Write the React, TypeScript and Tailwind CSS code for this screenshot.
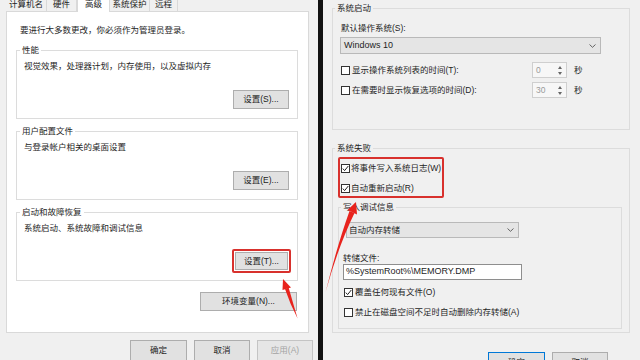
const Check = ({ checked }: { checked?: boolean }) => (
  <span className="w-[9px] h-[9px] border border-[#333] bg-white flex items-center justify-center shrink-0">
    {checked && (
      <svg width="7" height="7" viewBox="0 0 7 7">
        <polyline points="0.8,3.6 2.6,5.6 6.3,1" fill="none" stroke="#222" strokeWidth="1" />
      </svg>
    )}
  </span>
);

const Chevron = () => (
  <svg width="7" height="4" viewBox="0 0 7 4" className="shrink-0">
    <polyline points="0.5,0.5 3.5,3.3 6.5,0.5" fill="none" stroke="#555" strokeWidth="0.9" />
  </svg>
);

const Btn = ({ label, className = "" }: { label: string; className?: string }) => (
  <div
    className={`shrink-0 bg-[#e1e1e1] border border-[#adadad] flex items-center justify-center text-[#222] ${className}`}
  >
    {label}
  </div>
);

const Spin = ({ value }: { value: string }) => (
  <div className="w-[35px] h-[16px] border border-[#cfcfcf] bg-[#f7f7f7] flex items-center">
    <span className="flex-1 pl-[3px] text-[#9a9a9a]">{value}</span>
    <div className="w-[8px] h-full flex flex-col items-center justify-center gap-[3px] mr-[2px]">
      <svg width="4" height="3" viewBox="0 0 4 3">
        <polygon points="0,3 2,0 4,3" fill="#666" />
      </svg>
      <svg width="4" height="3" viewBox="0 0 4 3">
        <polygon points="0,0 2,3 4,0" fill="#666" />
      </svg>
    </div>
  </div>
);

const Tab = ({ label, w, active }: { label: string; w: string; active?: boolean }) => (
  <div
    className={`${w} flex justify-center border-r border-[#d9d9d9] ${
      active ? "relative z-10 h-[12px] bg-white border-l" : "h-[11px]"
    }`}
  >
    <span className="-mt-[1px] leading-[11px]">{label}</span>
  </div>
);

const Group = ({
  title,
  desc,
  button,
  red,
  className = "",
}: {
  title: string;
  desc: string;
  button: string;
  red?: boolean;
  className?: string;
}) => (
  <fieldset className={`shrink-0 ml-[9px] w-[282px] h-[75px] border border-[#dcdcdc] flex flex-col ${className}`}>
    <legend className="ml-[3px] px-[2px] leading-[12px]">{title}</legend>
    <div className="mt-[4px] pl-[7px] leading-[12px]">{desc}</div>
    {red ? (
      <div className="shrink-0 mt-[15px] ml-auto mr-[6px] w-[59px] h-[24px] border-2 border-[#d8312d] rounded-[2px] p-[1px]">
        <Btn label={button} className="w-full h-full" />
      </div>
    ) : (
      <Btn label={button} className="mt-[18px] ml-auto mr-[8px] w-[56px] h-[19px]" />
    )}
  </fieldset>
);

export default function App() {
  return (
    <div className="relative w-[640px] h-[360px] flex overflow-hidden text-[8.5px] text-[#1e1e1e] font-['Liberation_Sans','Noto_Sans_CJK_SC',sans-serif]">
      {/* left: system properties */}
      <div className="w-[318px] h-full bg-[#f0f0f0] flex flex-col">
        <div className="shrink-0 h-[11px] flex pl-[6px]">
          <Tab label="计算机名" w="w-[41px]" />
          <Tab label="硬件" w="w-[30px]" />
          <Tab label="高级" w="w-[33px]" active />
          <Tab label="系统保护" w="w-[40px]" />
          <Tab label="远程" w="w-[28px]" />
        </div>
        <div className="shrink-0 ml-[6px] w-[303px] h-[322px] bg-white border border-[#d9d9d9] flex flex-col">
          <div className="mt-[12px] pl-[13px] leading-[12px]">要进行大多数更改，你必须作为管理员登录。</div>
          <Group
            className="mt-[8px]"
            title="性能"
            desc="视觉效果，处理器计划，内存使用，以及虚拟内存"
            button="设置(S)..."
          />
          <Group className="mt-[6px]" title="用户配置文件" desc="与登录帐户相关的桌面设置" button="设置(E)..." />
          <Group
            className="mt-[6px]"
            title="启动和故障恢复"
            desc="系统启动、系统故障和调试信息"
            button="设置(T)..."
            red
          />
          <Btn label="环境变量(N)..." className="mt-[11px] ml-[193px] w-[97px] h-[19px]" />
        </div>
        <div className="shrink-0 mt-[7px] flex gap-[7px] pl-[130px]">
          <Btn label="确定" className="w-[57px] h-[21px]" />
          <Btn label="取消" className="w-[56px] h-[21px]" />
          <div className="w-[56px] h-[21px] bg-[#e6e6e6] border border-[#c4c4c4] flex items-center justify-center text-[#a3a3a3]">
            应用(A)
          </div>
        </div>
      </div>

      <div className="w-[5px] h-full bg-[#111]" />

      {/* right: startup and recovery */}
      <div className="flex-1 h-full bg-[#f0f0f0] flex flex-col">
        <fieldset className="shrink-0 mt-[2px] ml-[9px] w-[298px] h-[128px] border border-[#dcdcdc] flex flex-col">
          <legend className="ml-[2px] px-[2px] leading-[12px]">系统启动</legend>
          <div className="mt-[8px] pl-[8px] leading-[12px]">默认操作系统(S):</div>
          <div className="shrink-0 mt-[3px] ml-[7px] w-[261px] h-[17px] bg-[#e5e5e5] border border-[#b9b9b9] flex items-center pl-[3px] pr-[4px]">
            <span className="flex-1 text-[9px]">Windows 10</span>
            <Chevron />
          </div>
          <div className="shrink-0 mt-[8px] ml-[8px] h-[16px] flex items-center">
            <div className="w-[191px] flex items-center gap-[2px]">
              <Check />
              <span>显示操作系统列表的时间(T):</span>
            </div>
            <Spin value="0" />
            <span className="ml-[7px]">秒</span>
          </div>
          <div className="shrink-0 mt-[4px] ml-[8px] h-[16px] flex items-center">
            <div className="w-[191px] flex items-center gap-[2px]">
              <Check />
              <span>在需要时显示恢复选项的时间(D):</span>
            </div>
            <Spin value="30" />
            <span className="ml-[7px]">秒</span>
          </div>
        </fieldset>

        <fieldset className="shrink-0 mt-[12px] ml-[9px] w-[298px] h-[191px] border border-[#dcdcdc] flex flex-col">
          <legend className="ml-[2px] px-[2px] leading-[12px]">系统失败</legend>
          <div className="shrink-0 mt-[3px] ml-[5px] w-[106px] h-[41px] border-2 border-[#d8312d] rounded-[2px] flex flex-col pt-[3px] pl-[1px] gap-[8px]">
            <div className="h-[12px] flex items-center gap-[1px]">
              <Check checked />
              <span>将事件写入系统日志(W)</span>
            </div>
            <div className="h-[12px] flex items-center gap-[1px]">
              <Check checked />
              <span>自动重新启动(R)</span>
            </div>
          </div>
          <fieldset className="shrink-0 mt-[3px] ml-[5px] w-[284px] h-[128px] border border-[#dcdcdc] flex flex-col">
            <legend className="ml-[2px] px-[2px] leading-[12px]">写入调试信息</legend>
            <div className="shrink-0 mt-[9px] ml-[7px] w-[173px] h-[16px] bg-[#e5e5e5] border border-[#b9b9b9] flex items-center pl-[2px] pr-[4px]">
              <span className="flex-1">自动内存转储</span>
              <Chevron />
            </div>
            <div className="mt-[14px] ml-[4px] leading-[12px]">转储文件:</div>
            <div className="shrink-0 ml-[4px] w-[179px] h-[16px] bg-white border border-[#8e8e8e] flex items-center pl-[2px] text-[9px]">
              %SystemRoot%\MEMORY.DMP
            </div>
            <div className="shrink-0 mt-[6px] ml-[5px] h-[12px] flex items-center gap-[2px]">
              <Check checked />
              <span>覆盖任何现有文件(O)</span>
            </div>
            <div className="shrink-0 mt-[8px] ml-[5px] h-[12px] flex items-center gap-[2px]">
              <Check />
              <span>禁止在磁盘空间不足时自动删除内存转储(A)</span>
            </div>
          </fieldset>
        </fieldset>

        <div className="shrink-0 mt-[19px] flex justify-end gap-[7px] pr-[32px]">
          <Btn label="确定" className="w-[57px] h-[21px] !border-[#0078d7]" />
          <Btn label="取消" className="w-[56px] h-[21px]" />
        </div>
      </div>

      {/* red annotation arrows */}
      <svg className="absolute inset-0 pointer-events-none" width="640" height="360" viewBox="0 0 640 360">
        <path d="M285,289 Q290,304 297.6,318.5 Q293,303 288.6,287.6 Z" fill="#e8231d" />
        <polygon points="283,279 291,287.5 282.5,290" fill="#e8231d" />
        <path d="M349.5,211 Q337,246 325.6,292 Q338,247 354.5,213 Z" fill="#e8231d" />
        <polygon points="356,202 357,214.5 347.5,210" fill="#e8231d" />
      </svg>
    </div>
  );
}
